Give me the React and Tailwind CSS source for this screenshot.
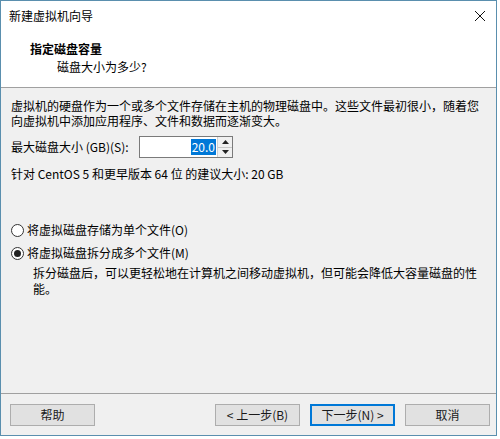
import React from 'react';

const font = { fontFamily: '"Noto Sans CJK SC", "Noto Sans", sans-serif' };

function Btn({ children, primary }) {
  return (
    <button
      className={`w-[85px] h-[22px] text-[12px] leading-none text-[#1a1a1a] bg-[#e1e1e1] border ${
        primary ? 'border-[#0078d7] border-2' : 'border-[#adadad]'
      }`}
    >
      {children}
    </button>
  );
}

export default function App() {
  return (
    <div className="w-[500px] h-[439px] bg-white" style={font}>
      <div className="w-[497px] h-[436px] border border-[#5a8fae] flex flex-col bg-[#f0f0f0]">
        {/* Title bar */}
        <div className="h-[30px] bg-white flex items-center justify-between pl-[8px] pr-[6px] shrink-0">
          <span className="text-[12px] text-black">新建虚拟机向导</span>
          <svg width="12" height="12" viewBox="0 0 12 12" className="mr-[4px]">
            <path d="M1 1L11 11M11 1L1 11" stroke="#111" strokeWidth="1" />
          </svg>
        </div>

        {/* Header */}
        <div className="h-[57px] bg-white border-b border-[#a0a0a0] pl-[29px] pt-[9px] shrink-0">
          <div className="text-[12px] font-bold text-black leading-[18px]">指定磁盘容量</div>
          <div className="text-[12px] text-black leading-[18px] pl-[27px]">磁盘大小为多少?</div>
        </div>

        {/* Body */}
        <div className="flex-1 flex flex-col px-[10px] pt-[10px] text-[12px] text-black">
          <p className="leading-[15px]">
            虚拟机的硬盘作为一个或多个文件存储在主机的物理磁盘中。这些文件最初很小，随着您向虚拟机中添加应用程序、文件和数据而逐渐变大。
          </p>

          <div className="flex items-center mt-[8px] h-[22px]">
            <span className="w-[128px]">最大磁盘大小 (GB)(S):</span>
            <div className="flex h-[22px] border border-[#7a7a7a] bg-white">
              <div className="w-[77px] flex items-center justify-end pr-[1px]">
                <span className="bg-[#0078d7] text-white px-[1px] leading-[16px]">20.0</span>
              </div>
              <div className="w-[15px] flex flex-col border-l border-[#d0d0d0]">
                <div className="flex-1 flex items-center justify-center bg-[#f0f0f0] border-b border-[#c8c8c8]">
                  <svg width="7" height="4" viewBox="0 0 7 4"><path d="M3.5 0L7 4H0Z" fill="#222" /></svg>
                </div>
                <div className="flex-1 flex items-center justify-center bg-[#f0f0f0]">
                  <svg width="7" height="4" viewBox="0 0 7 4"><path d="M0 0H7L3.5 4Z" fill="#222" /></svg>
                </div>
              </div>
            </div>
          </div>

          <div className="mt-[8px] leading-[15px]">针对 CentOS 5 和更早版本 64 位 的建议大小: 20 GB</div>

          <div className="mt-[41px] flex items-center h-[16px]">
            <span className="w-[13px] h-[13px] rounded-full border border-[#333] bg-white mr-[3px]" />
            <span>将虚拟磁盘存储为单个文件(O)</span>
          </div>
          <div className="mt-[7px] flex items-center h-[16px]">
            <span className="w-[13px] h-[13px] rounded-full border border-[#333] bg-white mr-[3px] flex items-center justify-center">
              <span className="w-[7px] h-[7px] rounded-full bg-[#222]" />
            </span>
            <span>将虚拟磁盘拆分成多个文件(M)</span>
          </div>
          <p className="pl-[22px] mt-[4px] leading-[16px]">
            拆分磁盘后，可以更轻松地在计算机之间移动虚拟机，但可能会降低大容量磁盘的性能。
          </p>
        </div>

        {/* Footer */}
        <div className="h-[42px] border-t border-[#a0a0a0] flex items-center pl-[9px] pr-[6px] shrink-0">
          <Btn>帮助</Btn>
          <div className="flex-1" />
          <div className="flex gap-[10px]">
            <Btn>&lt; 上一步(B)</Btn>
            <Btn primary>下一步(N) &gt;</Btn>
            <Btn>取消</Btn>
          </div>
        </div>
      </div>
    </div>
  );
}
